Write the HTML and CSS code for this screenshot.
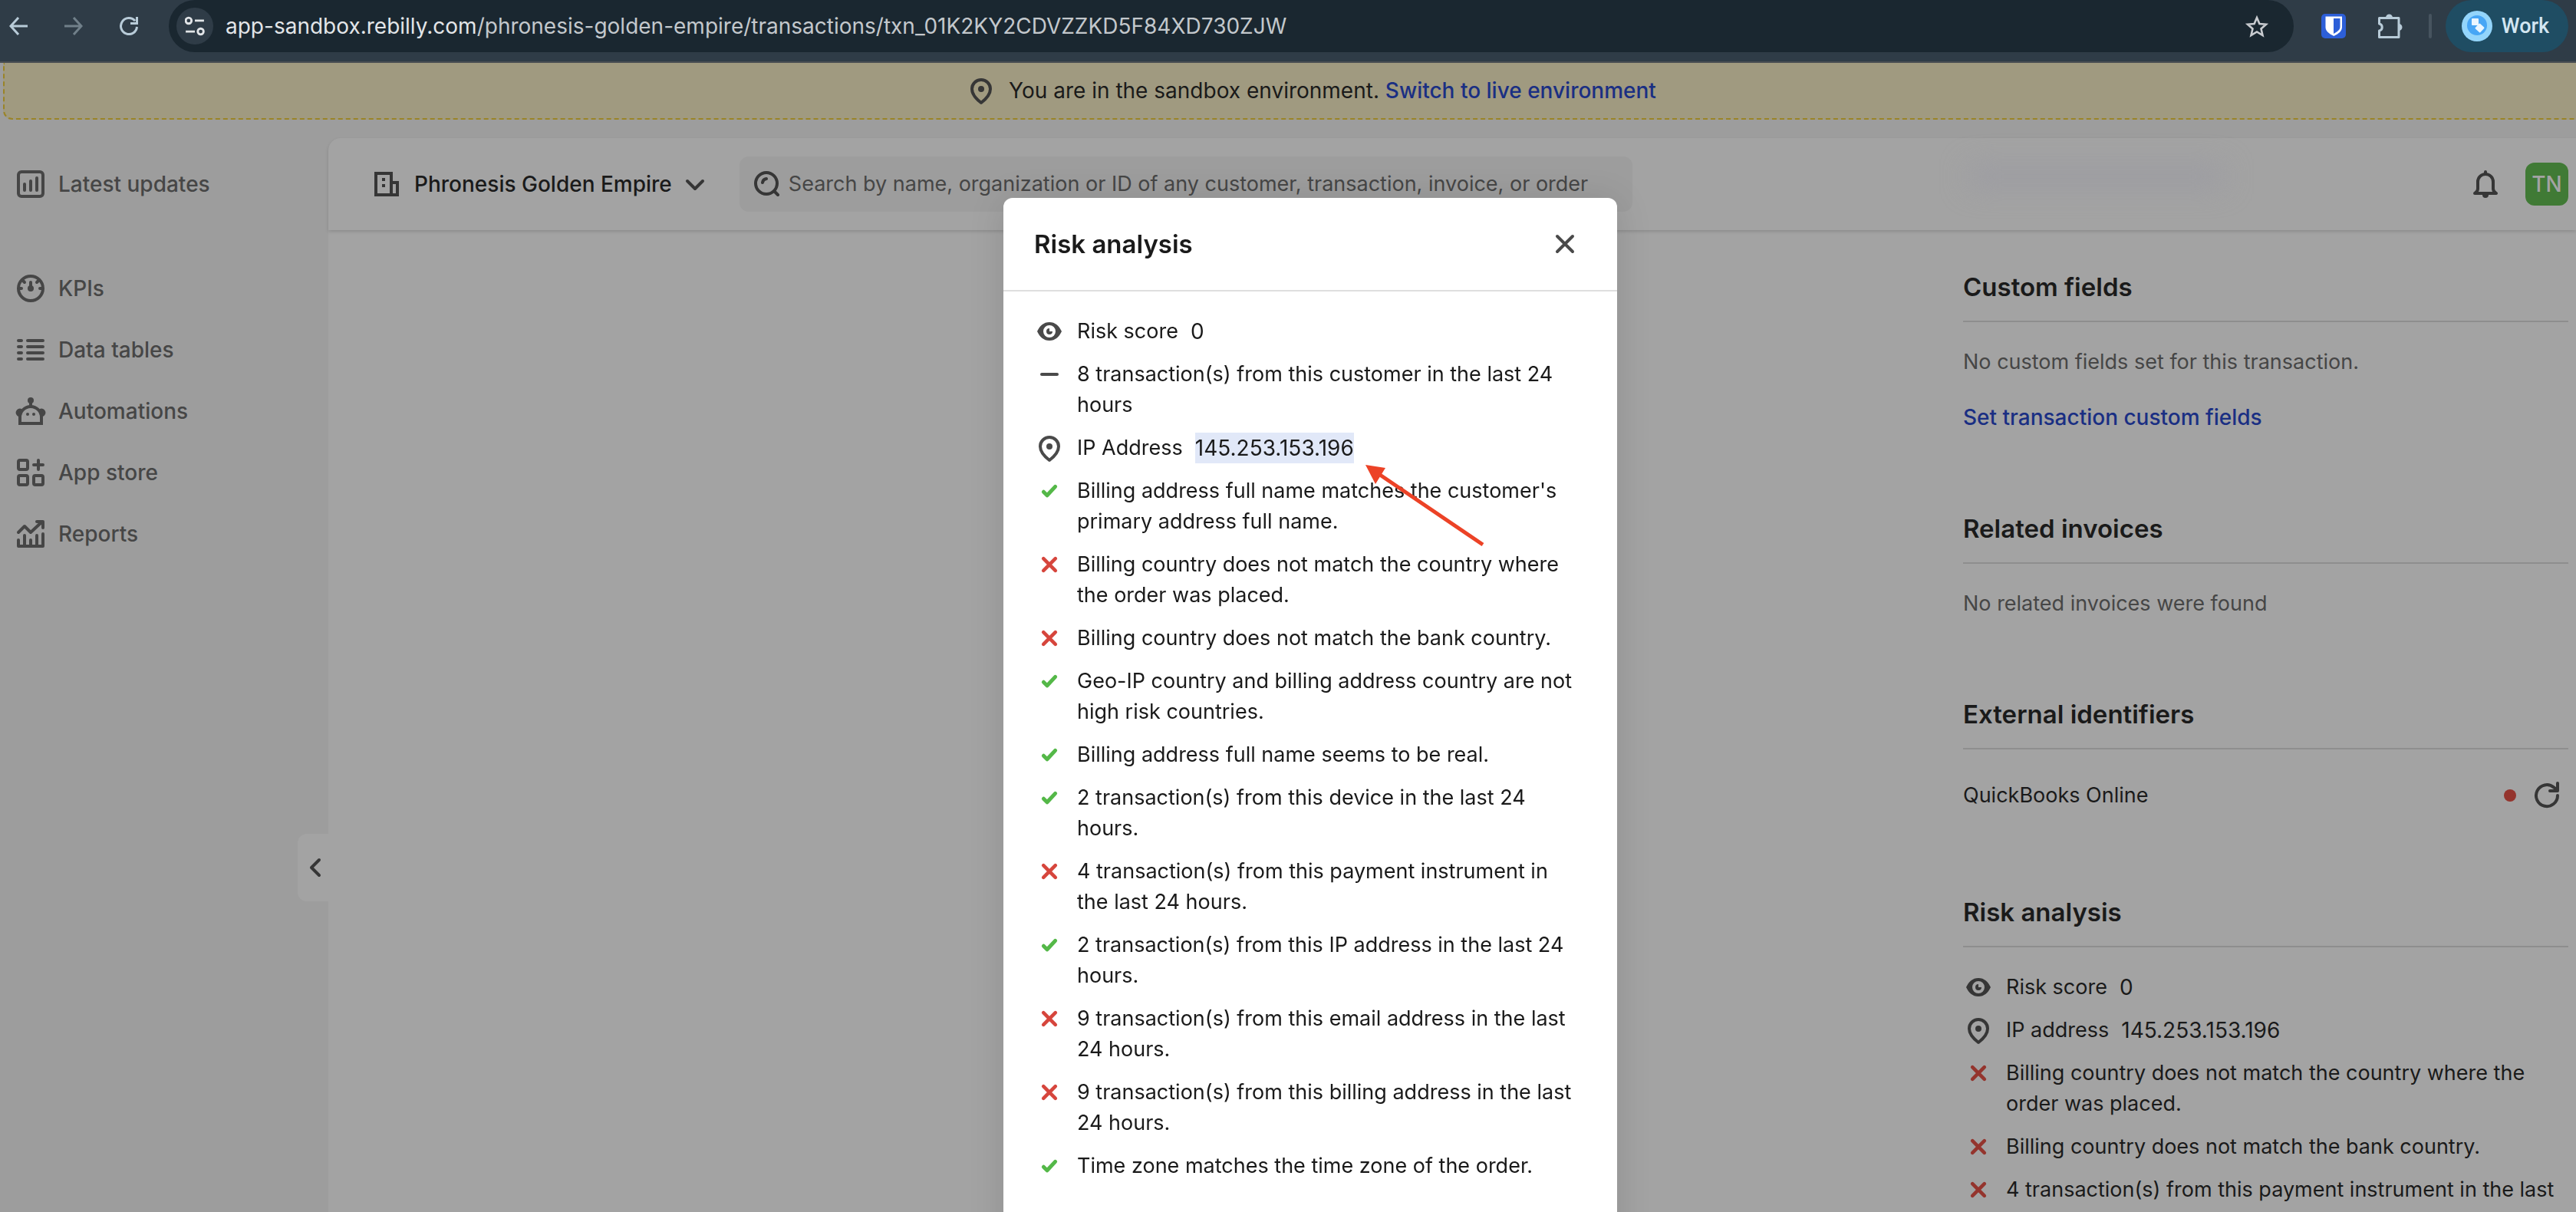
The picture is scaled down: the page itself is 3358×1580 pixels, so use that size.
FILE: index.html
```html
<!DOCTYPE html>
<html lang="en">
<head>
<meta charset="utf-8">
<title>Risk analysis</title>
<link rel="stylesheet" href="styles.css">
</head>
<body>
<svg class="sprite" aria-hidden="true">
  <symbol id="i-pin" viewBox="0 0 20 20"><path d="M10 3a6 6 0 0 1 6 6c0 3-2 5.900-6 9-4-3.100-6-6-6-9a6 6 0 0 1 6-6z" fill="none" stroke="currentColor" stroke-width="2" stroke-linejoin="round"/><circle cx="10" cy="9" r="2" fill="currentColor"/></symbol>
  <symbol id="i-eye" viewBox="0 0 20 20"><path fill="currentColor" fill-rule="evenodd" d="M10 4c3.800 0 6.300 2.400 8 6-1.700 3.600-4.200 6-8 6s-6.300-2.400-8-6c1.700-3.600 4.200-6 8-6zm0 2a4 4 0 1 0 0 8 4 4 0 0 0 0-8z"/><path fill="currentColor" d="M10 8a2 2 0 1 0 2 2h-2z"/></symbol>
  <symbol id="i-minus" viewBox="0 0 20 20"><path d="M5 10h10" stroke="currentColor" stroke-width="2" stroke-linecap="round"/></symbol>
  <symbol id="i-check" viewBox="0 0 20 20"><path d="M6.200 10.600l2.300 2.300L13.800 7.200" fill="none" stroke="currentColor" stroke-width="2.500" stroke-linecap="round" stroke-linejoin="round"/></symbol>
  <symbol id="i-cross" viewBox="0 0 20 20"><path d="M6.100 6.100l7.800 7.800M13.900 6.100l-7.800 7.800" stroke="currentColor" stroke-width="2.300" stroke-linecap="round"/></symbol>
</svg>

<header class="browser">
  <nav class="browser-nav">
    <button aria-label="Back"><svg viewBox="0 0 24 24"><path d="M12 1L2 12l10 11M2 12h22" fill="none" stroke="currentColor" stroke-width="3"/></svg></button>
    <button aria-label="Forward" class="off"><svg viewBox="0 0 24 24"><path d="M12 1l10 11-10 11M22 12H0" fill="none" stroke="currentColor" stroke-width="3"/></svg></button>
    <button aria-label="Reload"><svg viewBox="0 0 24 24"><path d="M22.500 13A10.500 10.500 0 1 1 20 5.200" fill="none" stroke="currentColor" stroke-width="3"/><path d="M22.500 0v8.500H14" fill="none" stroke="currentColor" stroke-width="3"/></svg></button>
  </nav>
  <div class="address">
    <button class="site-info" aria-label="Site information"><svg viewBox="0 0 24 24"><g fill="none" stroke="currentColor" stroke-width="2.600"><circle cx="4.500" cy="5.500" r="3.500"/><path d="M12 5.500h11M1 18.500h11"/><circle cx="19" cy="18.500" r="3.500"/></g></svg></button>
    <span class="url">app-sandbox.rebilly.com<span>/phronesis-golden-empire/transactions/txn_01K2KY2CDVZZKD5F84XD730ZJW</span></span>
    <button class="star" aria-label="Bookmark"><svg viewBox="0 0 32 32"><path d="M16 5l3.400 8 8.600.8-6.500 5.700 2 8.500-7.500-4.500L8.500 28l2-8.500L4 13.800l8.600-.8z" fill="none" stroke="currentColor" stroke-width="2.600"/></svg></button>
  </div>
  <div class="extensions">
    <button aria-label="Bitwarden"><svg viewBox="0 0 32 32"><rect width="32" height="32" rx="5" fill="#2d5fd8"/><path d="M5.500 3.500h21.500v14c0 5-4.500 8.500-10.700 11.500C10 26 5.500 22.500 5.500 17.500z" fill="#fff"/><path d="M16 6h8.500v11c0 4-4 6.800-8.500 9z" fill="#2d5fd8"/></svg></button>
    <button aria-label="Extensions"><svg viewBox="0 0 32 32"><path d="M2.500 5.500h24.500v25H1.500V22c5-1 5-8 0-9V5.500z" fill="none" stroke="currentColor" stroke-width="3" stroke-linejoin="round"/><path d="M10 5a4.500 4.500 0 0 1 9 0zM27 13a4.500 4.500 0 0 1 0 9z" fill="currentColor"/></svg></button>
    <span class="divider"></span>
    <button class="profile"><svg viewBox="0 0 40 40"><circle cx="20" cy="20" r="20" fill="#93d5fb"/><circle cx="20" cy="19" r="13" fill="#47a6f5"/><rect x="13" y="10" width="9" height="9" rx="1" fill="#eaf6ff"/><rect x="19" y="18" width="9" height="9" rx="1" transform="rotate(42 23.500 22.500)" fill="#eaf6ff"/></svg>Work</button>
  </div>
</header>

<div class="banner">
  <svg class="icon"><use href="#i-pin"/></svg>
  <p>You are in the sandbox environment. <a href="#">Switch to live environment</a></p>
</div>

<div class="app">
  <aside class="sidebar">
    <nav>
      <a href="#" class="updates"><svg class="icon" viewBox="0 0 20 20"><g fill="none" stroke="currentColor" stroke-width="2" stroke-linecap="round"><rect x="2" y="2" width="16" height="16" rx="2"/><path d="M6 10v4M10 8v6M14 6v8"/></g></svg>Latest updates</a>
      <a href="#"><svg class="icon" viewBox="0 0 20 20"><g fill="none" stroke="currentColor" stroke-width="2" stroke-linecap="round"><circle cx="10" cy="10" r="8"/><path d="M10 6v4M3 10h1M16 10h1M5 5l1 1M15 5l-1 1"/></g><circle cx="10" cy="10" r="2" fill="currentColor"/></svg>KPIs</a>
      <a href="#"><svg class="icon" viewBox="0 0 20 20"><path d="M2 4h2M2 8h2M2 12h2M2 16h2M8 4h10M8 8h10M8 12h10M8 16h10" stroke="currentColor" stroke-width="2" stroke-linecap="round"/></svg>Data tables</a>
      <a href="#"><svg class="icon" viewBox="0 0 20 20"><path d="M3 18v-4a7 7 0 0 1 14 0v4zM10 4v3" fill="none" stroke="currentColor" stroke-width="2"/><g fill="currentColor"><circle cx="10" cy="3" r="2"/><circle cx="8" cy="12" r="1"/><circle cx="12" cy="12" r="1"/><path d="M4 8.500a2.500 2.500 0 0 0-2 5h2zM16 8.500a2.500 2.500 0 0 1 2 5h-2z"/></g></svg>Automations</a>
      <a href="#"><svg class="icon" viewBox="0 0 20 20"><g fill="none" stroke="currentColor" stroke-width="2" stroke-linecap="round"><rect x="2" y="2" width="6" height="6" rx="1"/><rect x="2" y="12" width="6" height="6" rx="1"/><rect x="12" y="12" width="6" height="6" rx="1"/><path d="M15 2v6M12 5h6"/></g></svg>App store</a>
      <a href="#"><svg class="icon" viewBox="0 0 20 20"><path d="M2 9l4-4 4 4 7.500-7M14 2h4v4M2 14v4h16v-8M6 11v7M10 14v4M14 11v7" fill="none" stroke="currentColor" stroke-width="2" stroke-linecap="round" stroke-linejoin="round"/></svg>Reports</a>
    </nav>
    <button class="collapse" aria-label="Collapse menu"><svg class="icon" viewBox="0 0 20 20"><path d="M14 5l-5 5 5 5" fill="none" stroke="currentColor" stroke-width="2" stroke-linecap="round" stroke-linejoin="round"/></svg></button>
  </aside>

  <main class="panel">
    <header class="topbar">
      <button class="org"><svg class="icon" viewBox="0 0 20 20"><path d="M3 3h10v14H3zM13 9h4v8h-4" fill="none" stroke="currentColor" stroke-width="2"/><path d="M7 6h2v2H7zM7 10h2v2H7z" fill="currentColor"/></svg>Phronesis Golden Empire<svg class="icon chevron" viewBox="0 0 20 20"><path d="M5 8l5 5 5-5" fill="none" stroke="currentColor" stroke-width="2" stroke-linecap="round" stroke-linejoin="round"/></svg></button>
      <label class="search"><svg class="icon" viewBox="0 0 20 20"><g fill="none" stroke="currentColor" stroke-width="2" stroke-linecap="round"><circle cx="9.500" cy="9.500" r="7"/><path d="M15 15l2 2M7 9a3 3 0 0 1 2.500-2.500"/></g></svg><input type="search" aria-label="Search" placeholder="Search by name, organization or ID of any customer, transaction, invoice, or order"></label>
      <div class="account">
        <button aria-label="Notifications"><svg class="icon" viewBox="0 0 20 20"><path d="M3 16c1-.500 2-1.500 2-3V8.500a5 5 0 0 1 10 0V13c0 1.500 1 2.500 2 3z" fill="none" stroke="currentColor" stroke-width="2" stroke-linejoin="round"/><path d="M9 2a1 1 0 0 1 2 0v1.500H9zM8 17h4a2 2 0 0 1-4 0z" fill="currentColor"/></svg></button>
        <button class="avatar">TN</button>
      </div>
    </header>

    <div class="details">
      <section>
        <h2>Custom fields</h2>
        <p class="muted">No custom fields set for this transaction.</p>
        <p><a href="#">Set transaction custom fields</a></p>
      </section>
      <section>
        <h2>Related invoices</h2>
        <p class="muted">No related invoices were found</p>
      </section>
      <section>
        <h2>External identifiers</h2>
        <div class="integration"><span>QuickBooks Online</span><i class="dot"></i><button aria-label="Sync"><svg class="icon" viewBox="0 0 20 20"><path d="M17 10a7 7 0 1 1-2.500-5.300L17 6.500M17 2v5h-5" fill="none" stroke="currentColor" stroke-width="2" stroke-linecap="round" stroke-linejoin="round"/></svg></button></div>
      </section>
      <section>
        <h2>Risk analysis</h2>
        <ul class="risks">
          <li><svg class="icon"><use href="#i-eye"/></svg><span>Risk score</span><span class="value">0</span></li>
          <li><svg class="icon"><use href="#i-pin"/></svg><span>IP address</span><span class="value">145.253.153.196</span></li>
          <li><svg class="icon bad"><use href="#i-cross"/></svg><span>Billing country does not match the country where the order was placed.</span></li>
          <li><svg class="icon bad"><use href="#i-cross"/></svg><span>Billing country does not match the bank country.</span></li>
          <li><svg class="icon bad"><use href="#i-cross"/></svg><span>4 transaction(s) from this payment instrument in the last 24 hours.</span></li>
        </ul>
      </section>
    </div>
  </main>
</div>

<div class="overlay">
  <div class="modal" role="dialog" aria-labelledby="modal-title">
    <header>
      <h2 id="modal-title">Risk analysis</h2>
      <button aria-label="Close"><svg class="icon" viewBox="0 0 20 20"><path d="M5 5l10 10M15 5L5 15" stroke="currentColor" stroke-width="2" stroke-linecap="round"/></svg></button>
    </header>
    <ul class="risks">
      <li><svg class="icon"><use href="#i-eye"/></svg><span>Risk score</span><span class="value">0</span></li>
      <li><svg class="icon"><use href="#i-minus"/></svg><span>8 transaction(s) from this customer in the last 24 hours</span></li>
      <li><svg class="icon"><use href="#i-pin"/></svg><span>IP Address</span><mark class="value">145.253.153.196</mark></li>
      <li><svg class="icon good"><use href="#i-check"/></svg><span>Billing address full name matches the customer's primary address full name.</span></li>
      <li><svg class="icon bad"><use href="#i-cross"/></svg><span>Billing country does not match the country where the order was placed.</span></li>
      <li><svg class="icon bad"><use href="#i-cross"/></svg><span>Billing country does not match the bank country.</span></li>
      <li><svg class="icon good"><use href="#i-check"/></svg><span>Geo-IP country and billing address country are not high risk countries.</span></li>
      <li><svg class="icon good"><use href="#i-check"/></svg><span>Billing address full name seems to be real.</span></li>
      <li><svg class="icon good"><use href="#i-check"/></svg><span>2 transaction(s) from this device in the last 24 hours.</span></li>
      <li><svg class="icon bad"><use href="#i-cross"/></svg><span>4 transaction(s) from this payment instrument in the last 24 hours.</span></li>
      <li><svg class="icon good"><use href="#i-check"/></svg><span>2 transaction(s) from this IP address in the last 24 hours.</span></li>
      <li><svg class="icon bad"><use href="#i-cross"/></svg><span>9 transaction(s) from this email address in the last 24 hours.</span></li>
      <li><svg class="icon bad"><use href="#i-cross"/></svg><span>9 transaction(s) from this billing address in the last 24 hours.</span></li>
      <li><svg class="icon good"><use href="#i-check"/></svg><span>Time zone matches the time zone of the order.</span></li>
    </ul>
    <svg class="arrow" viewBox="0 0 160 110" aria-hidden="true"><path d="M16 11L153 104" stroke="#ec4226" stroke-width="5"/><path d="M0 0l26 4-13 21z" fill="#ec4226"/></svg>
  </div>
</div>
</body>
</html>
```
FILE: styles.css
```css
:root {
  --ink: #1a1a1a;
  --muted: #464646;
  --icon: #363636;
  --link: #1a2f83;
  --shell: #9d9d9d;
  --panel: #a3a3a3;
  --rule: #8e8e8e;
  --good: #54b848;
  --bad: #94342d;
}

* { box-sizing: border-box; }

body {
  display: flex;
  flex-direction: column;
  height: 100vh;
  margin: 0;
  overflow: hidden;
  background: var(--shell);
  color: var(--ink);
  font: 400 27px/40px Inter, "Liberation Sans", sans-serif;
}

h2, p, ul { margin: 0; padding: 0; }
h2 { font-size: 33px; line-height: 48px; font-weight: 600; }
ul { list-style: none; }
a { color: var(--link); font-weight: 500; text-decoration: none; }
svg { display: block; flex: none; }
button {
  display: flex;
  align-items: center;
  justify-content: center;
  padding: 0;
  border: 0;
  background: none;
  color: inherit;
  font: inherit;
}

.sprite { position: absolute; width: 0; height: 0; }
.icon { width: 40px; height: 40px; color: var(--icon); }

/* Browser toolbar */
.browser {
  display: flex;
  flex: none;
  align-items: flex-start;
  padding: 0 10px 12px 12px;
  border-bottom: 2px solid #4a4f53;
  background: #2f3c47;
  color: #b8cbd8;
}
.browser-nav { display: flex; gap: 48px; height: 68px; }
.browser-nav svg { width: 24px; height: 24px; }
.browser-nav .off { color: #71808a; }
.address {
  display: flex;
  flex: 1;
  align-items: center;
  height: 68px;
  margin: 0 36px 0 40px;
  padding: 0 32px 0 10px;
  border-radius: 34px;
  background: #1a2730;
  color: #e2e5e8;
}
.site-info { width: 48px; height: 48px; border-radius: 50%; background: #2f3c47; }
.site-info svg { width: 26px; height: 26px; }
.url { flex: 1; margin-left: 16px; font-size: 28px; }
.url span { color: #c3c8cc; }
.star { color: #c9ccd0; }
.star svg, .extensions svg { width: 32px; height: 32px; }
.extensions { display: flex; align-items: center; height: 68px; }
.extensions button + button { margin-left: 42px; }
.divider { width: 4px; height: 32px; margin: 0 18px 0 34px; border-radius: 2px; background: #47545f; }
.extensions .profile {
  gap: 12px;
  width: 160px;
  height: 68px;
  padding-right: 4px;
  border-radius: 34px;
  background: #1f4d63;
  color: #d3e6f2;
  font: 500 27px/40px Roboto, sans-serif;
}
.extensions .profile svg { width: 40px; height: 40px; }

/* Environment banner */
.banner {
  display: flex;
  flex: none;
  align-items: center;
  justify-content: center;
  gap: 16px;
  height: 74px;
  margin-left: 4px;
  padding-left: 54px;
  border: 2px dashed #9a8426;
  border-width: 0 0 2px 2px;
  border-radius: 0 0 0 12px;
  background: #a09a80;
  font-size: 28px;
}

/* Application shell */
.app { display: flex; flex: 1; min-height: 0; padding-top: 24px; }
.sidebar { position: relative; flex: none; width: 428px; padding: 20px 0 0 28px; }
.sidebar nav a {
  display: flex;
  align-items: center;
  gap: 16px;
  height: 80px;
  margin-left: -8px;
  color: var(--muted);
  font-size: 28px;
}
.sidebar nav .updates { margin-bottom: 56px; }
.sidebar nav .icon { color: var(--muted); }
.collapse {
  position: absolute;
  top: 907px;
  right: 0;
  width: 40px;
  height: 88px;
  border-radius: 12px 0 0 12px;
  background: var(--panel);
}
.panel {
  display: flex;
  flex: 1;
  flex-direction: column;
  min-width: 0;
  border-top-left-radius: 16px;
  background: var(--panel);
}
.topbar {
  position: relative;
  display: flex;
  flex: none;
  align-items: center;
  height: 120px;
  padding: 0 10px 0 56px;
  border-top-left-radius: 16px;
  box-shadow: 0 2px 4px rgba(0, 0, 0, .14);
}
/* Page content scrolled behind the frosted top bar */
.topbar::after {
  content: "";
  position: absolute;
  top: 38px;
  right: 460px;
  width: 330px;
  height: 24px;
  background: #9b9ba2;
  filter: blur(18px);
}
.org { gap: 16px; font-size: 28px; font-weight: 500; }
.org .chevron { margin-left: -6px; }
.search {
  display: flex;
  align-items: center;
  gap: 4px;
  width: 1164px;
  height: 72px;
  margin-left: 38px;
  padding: 0 16px;
  border-radius: 12px;
  background: #9d9d9d;
}
.search input {
  flex: 1;
  min-width: 0;
  padding: 0 4px;
  border: 0;
  outline: 0;
  background: none;
  font: inherit;
}
.search input::placeholder { color: var(--muted); opacity: 1; }
.account { display: flex; align-items: center; gap: 32px; margin-left: auto; }
.avatar {
  width: 56px;
  height: 56px;
  border-radius: 12px;
  background: #407a35;
  color: #a3a3a3;
  font-size: 28px;
  font-weight: 500;
}

/* Transaction details column */
.details {
  display: flex;
  flex-direction: column;
  gap: 100px;
  align-self: flex-end;
  width: 799px;
  padding: 50px 10px 0 0;
}
.details section { display: flex; flex-direction: column; gap: 32px; }
.details h2 { padding-bottom: 20px; border-bottom: 2px solid var(--rule); }
.details .muted { color: var(--muted); }
.details a { font-size: 28px; }
.integration { display: flex; align-items: center; height: 56px; padding-right: 8px; }
.dot { width: 16px; height: 16px; margin: 0 20px 0 auto; border-radius: 50%; background: var(--bad); }

.risks { display: flex; flex-direction: column; gap: 16px; }
.risks li { display: flex; gap: 16px; }
.risks .good { color: var(--good); }
.risks .bad { color: var(--bad); }
.risks .value { font-size: 28px; }

/* Modal */
.overlay {
  position: fixed;
  inset: 258px 0 0 58px;
  display: flex;
  justify-content: center;
}
.modal {
  --icon: #4a4a4a;
  --bad: #d6453c;
  position: relative;
  width: 800px;
  height: 100vh;
  border-radius: 12px;
  background: #fff;
  box-shadow: 0 4px 48px rgba(0, 0, 0, .12);
}
.modal header {
  display: flex;
  align-items: center;
  justify-content: space-between;
  height: 122px;
  padding: 0 40px;
  border-bottom: 2px solid #dedede;
}
.modal header button { width: 56px; height: 56px; }
.modal .risks { padding: 32px 48px 32px 40px; }
mark { background: #e1e8f8; color: inherit; }
.arrow { position: absolute; top: 348px; left: 472px; width: 160px; height: 110px; }
```
